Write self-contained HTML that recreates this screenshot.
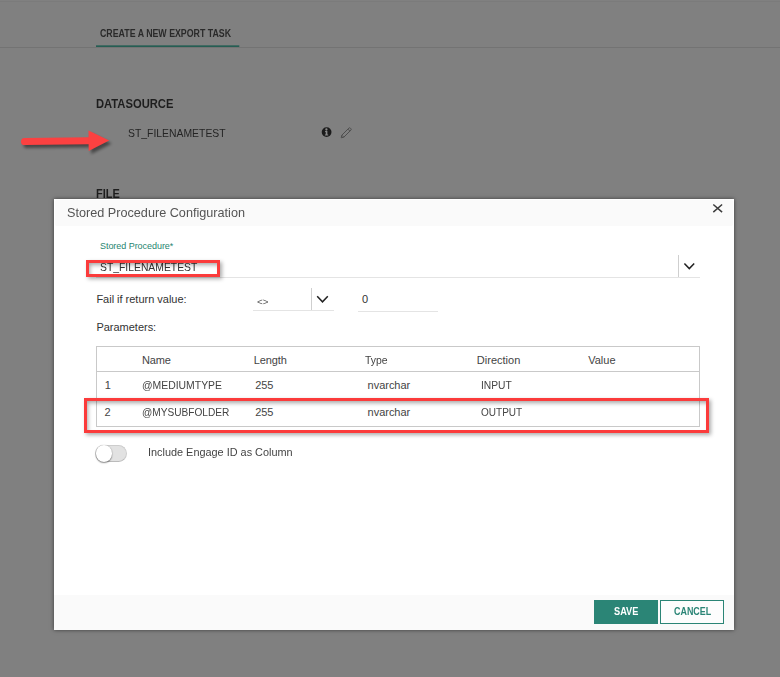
<!DOCTYPE html>
<html>
<head>
<meta charset="utf-8">
<title>Stored Procedure Configuration</title>
<style>
html,body{margin:0;padding:0;}
body{width:780px;height:677px;overflow:hidden;background:#808080;font-family:"Liberation Sans",sans-serif;position:relative;}
.t{position:absolute;white-space:nowrap;line-height:1;transform-origin:0 0;}
.abs{position:absolute;}
#dlg{position:absolute;left:54px;top:199px;width:680px;height:431px;background:#fff;box-shadow:0 0 4px rgba(0,0,0,.55);}
#dlg .hd{position:absolute;left:1px;top:1px;width:678px;height:25.5px;background:#fafafa;border-radius:2px;}
#dlg .ft{position:absolute;left:0;top:396px;width:680px;height:35px;background:#fafafa;}
.ln{position:absolute;background:#e4e4e4;height:1px;}
.vl{position:absolute;background:#cfcfcf;width:1px;}
.tb{position:absolute;background:#c9c9c9;}
.redbox{position:absolute;border:3px solid #fb3b3b;box-sizing:border-box;box-shadow:2px 2px 4px rgba(0,0,0,.33), inset 2px 3px 4px -1px rgba(0,0,0,.35);}
</style>
</head>
<body>
<!-- page behind overlay -->
<div class="abs" style="left:0;top:1px;width:780px;height:1px;background:#7b7b7b"></div>
<div class="abs" style="left:0;top:47px;width:780px;height:1px;background:#737373"></div>
<svg class="abs" style="left:96px;top:44px" width="144" height="4"><rect x="0" y="1.4" width="143.3" height="1.5" fill="#1b5a4e"/></svg>
<span class="t" style="left:99.6px;top:27.8px;font-size:10.5px;font-weight:700;color:#2a2a2a;transform:scaleX(0.8385);">CREATE A NEW EXPORT TASK</span>
<span class="t" style="left:95.8px;top:98.2px;font-size:12.8px;font-weight:700;color:#1e1e1e;transform:scaleX(0.8757);">DATASOURCE</span>
<span class="t" style="left:127.7px;top:127.7px;font-size:11px;color:#242424;transform:scaleX(0.9448);">ST_FILENAMETEST</span>
<span class="t" style="left:95.8px;top:188.2px;font-size:12.8px;font-weight:700;color:#1e1e1e;transform:scaleX(0.8545);">FILE</span>
<!-- info icon -->
<svg class="abs" style="left:320px;top:125px" width="14" height="14" viewBox="0 0 14 14">
<circle cx="6.6" cy="7.1" r="4.9" fill="#1b1b1b"/>
<circle cx="6.4" cy="4.5" r="1.15" fill="#8a8a8a"/>
<path d="M5.1 6.1h2.3v3.3h.8v1H4.9v-1h.8V7.1h-.6z" fill="#8a8a8a"/>
</svg>
<!-- pencil icon -->
<svg class="abs" style="left:338.6px;top:125.5px" width="14" height="14" viewBox="0 0 14 14">
<path d="M2.2 11.8l.6-2.6L9.9 2.1a1 1 0 0 1 1.4 0l.6.6a1 1 0 0 1 0 1.4L4.8 11.2z M8.9 3.1l2 2 M2.8 9.2l2 2" fill="none" stroke="#4e4e4e" stroke-width="1" stroke-linejoin="round"/>
</svg>
<!-- red arrow -->
<svg class="abs" style="left:10px;top:120px" width="120" height="45" viewBox="10 120 120 45">
<defs><filter id="sh" x="-20%" y="-50%" width="140%" height="200%"><feGaussianBlur stdDeviation="1.6"/></filter></defs>
<g transform="translate(2.5,3)" opacity=".45" filter="url(#sh)">
<path d="M24.5 141.6L89 140.7" stroke="#000" stroke-width="7" stroke-linecap="round" fill="none"/>
<path d="M88.5 130.4L109.2 140.4L88.7 151z" fill="#000"/>
</g>
<path d="M24.5 141.6L89 140.7" stroke="#fb4141" stroke-width="7" stroke-linecap="round" fill="none"/>
<path d="M88.5 130.4L109.2 140.4L88.7 151z" fill="#fb4141"/>
</svg>

<div id="dlg">
<div class="hd"></div>
<div class="ft"></div>
<!-- close X -->
<svg class="abs" style="left:657px;top:3px" width="14" height="14" viewBox="0 0 14 14"><path d="M2.3 2.5l8.8 7.6M11.1 2.5l-8.8 7.6" stroke="#3c3c3c" stroke-width="1.5" fill="none"/></svg>
<!-- select 1 -->
<div class="ln" style="left:42px;top:78px;width:604px"></div>
<div class="vl" style="left:624px;top:56px;height:22px"></div>
<svg class="abs" style="left:628px;top:61px" width="14" height="12" viewBox="0 0 14 12"><path d="M2.4 3.4l4.9 5.2l4.9-5.2" stroke="#222" stroke-width="1.5" fill="none"/></svg>
<!-- select 2 -->
<div class="ln" style="left:199px;top:111px;width:81px"></div>
<div class="vl" style="left:257px;top:89px;height:22px"></div>
<svg class="abs" style="left:261px;top:94px" width="14" height="12" viewBox="0 0 14 12"><path d="M2.2 3.2l5.3 5.6l5.3-5.6" stroke="#222" stroke-width="1.5" fill="none"/></svg>
<div class="ln" style="left:304px;top:112px;width:80px"></div>
<!-- table -->
<div class="tb" style="left:42px;top:147px;width:604px;height:1px"></div>
<div class="tb" style="left:42px;top:172px;width:604px;height:1px"></div>
<div class="tb" style="left:42px;top:200px;width:604px;height:1px"></div>
<div class="tb" style="left:42px;top:227px;width:604px;height:1px"></div>
<div class="tb" style="left:42px;top:147px;width:1px;height:81px"></div>
<div class="tb" style="left:645px;top:147px;width:1px;height:81px"></div>
<!-- toggle -->
<div class="abs" style="left:41px;top:246px;width:32px;height:17px;border-radius:9px;background:#e2e2e2;box-sizing:border-box;border:1px solid #cdcdcd;border-bottom-color:#bbb"></div>
<div class="abs" style="left:41.5px;top:246px;width:16.5px;height:16.5px;border-radius:9px;background:#fff;box-shadow:0 1px 1.5px rgba(0,0,0,.45), 0 0 1px rgba(0,0,0,.25)"></div>
<!-- buttons -->
<div class="abs" style="left:540px;top:401px;width:64px;height:24px;background:#2b8576"></div>
<div class="abs" style="left:606px;top:401px;width:64px;height:24px;background:#fdfdfd;border:1px solid #2b8576;box-sizing:border-box"></div>
<span class="t" style="left:13.0px;top:7.0px;font-size:13px;color:#555;transform:scaleX(0.9735);">Stored Procedure Configuration</span>
<span class="t" style="left:46.0px;top:42.9px;font-size:9px;color:#1f8570;letter-spacing:-0.047px;">Stored Procedure*</span>
<span class="t" style="left:46.2px;top:63.3px;font-size:10.8px;color:#333;transform:scaleX(0.9597);">ST_FILENAMETEST</span>
<span class="t" style="left:42.4px;top:94.5px;font-size:11px;color:#333;letter-spacing:-0.014px;">Fail if return value:</span>
<span class="t" style="left:202.7px;top:98.0px;font-size:9.5px;color:#555;transform:scaleX(1.0352);">&lt;&gt;</span>
<span class="t" style="left:307.9px;top:94.6px;font-size:11px;color:#333;">0</span>
<span class="t" style="left:42.4px;top:122.7px;font-size:11px;color:#333;letter-spacing:-0.012px;">Parameters:</span>
<span class="t" style="left:88.0px;top:155.7px;font-size:11px;color:#444;letter-spacing:-0.181px;">Name</span>
<span class="t" style="left:199.8px;top:155.7px;font-size:11px;color:#444;letter-spacing:-0.131px;">Length</span>
<span class="t" style="left:311.4px;top:155.7px;font-size:11px;color:#444;transform:scaleX(0.9472);">Type</span>
<span class="t" style="left:422.8px;top:155.7px;font-size:11px;color:#444;letter-spacing:0.012px;">Direction</span>
<span class="t" style="left:534.2px;top:155.7px;font-size:11px;color:#444;letter-spacing:0.018px;">Value</span>
<span class="t" style="left:50.8px;top:180.5px;font-size:11px;color:#444;">1</span>
<span class="t" style="left:87.8px;top:180.5px;font-size:11px;color:#444;transform:scaleX(0.9466);">@MEDIUMTYPE</span>
<span class="t" style="left:201.2px;top:180.5px;font-size:11px;color:#444;letter-spacing:-0.030px;">255</span>
<span class="t" style="left:313.6px;top:180.5px;font-size:11px;color:#444;letter-spacing:-0.028px;">nvarchar</span>
<span class="t" style="left:427.0px;top:180.5px;font-size:11px;color:#444;transform:scaleX(0.9333);">INPUT</span>
<span class="t" style="left:50.4px;top:207.9px;font-size:11px;color:#444;">2</span>
<span class="t" style="left:87.8px;top:207.9px;font-size:11px;color:#444;transform:scaleX(0.9209);">@MYSUBFOLDER</span>
<span class="t" style="left:201.2px;top:207.9px;font-size:11px;color:#444;letter-spacing:-0.030px;">255</span>
<span class="t" style="left:313.6px;top:207.9px;font-size:11px;color:#444;letter-spacing:-0.028px;">nvarchar</span>
<span class="t" style="left:427.0px;top:207.9px;font-size:11px;color:#444;transform:scaleX(0.9108);">OUTPUT</span>
<span class="t" style="left:94.2px;top:247.5px;font-size:11.5px;color:#444;transform:scaleX(0.9464);">Include Engage ID as Column</span>
<span class="t" style="left:559.6px;top:408.1px;font-size:10px;font-weight:700;color:#fff;transform:scaleX(0.9208);">SAVE</span>
<span class="t" style="left:619.6px;top:408.1px;font-size:10px;font-weight:700;color:#2b8576;transform:scaleX(0.8927);">CANCEL</span>
<!-- red highlight boxes -->
<div class="redbox" style="left:32px;top:61px;width:134px;height:17px"></div>
<div class="redbox" style="left:30px;top:199px;width:625px;height:35px"></div>
</div>
</body>
</html>
